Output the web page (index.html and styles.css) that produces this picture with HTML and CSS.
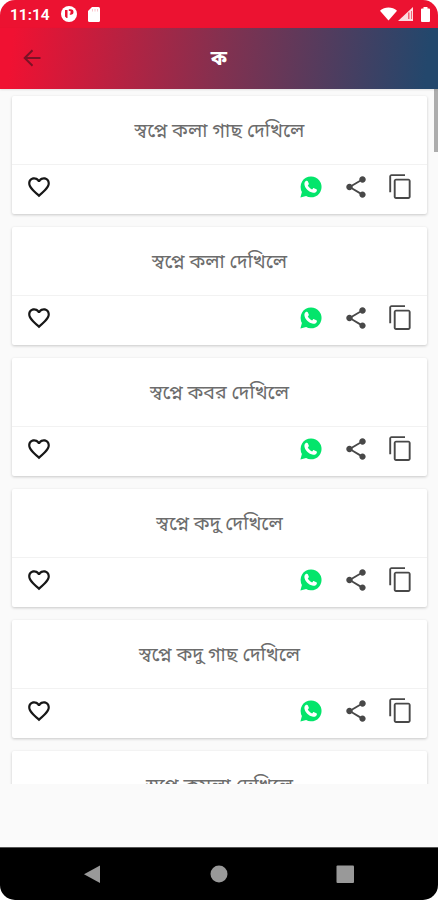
FILE: index.html
```html
<!DOCTYPE html>
<html lang="bn">
<head>
<meta charset="utf-8">
<title>ক</title>
<link rel="stylesheet" href="styles.css">
</head>
<body>
<svg class="sprite" aria-hidden="true">
  <symbol id="heart" viewBox="0 0 24 24"><path d="M16.5 3c-1.74 0-3.41.81-4.5 2.09C10.91 3.81 9.24 3 7.5 3 4.42 3 2 5.42 2 8.5c0 3.78 3.4 6.86 8.55 11.54L12 21.35l1.45-1.32C18.6 15.36 22 12.28 22 8.5 22 5.42 19.58 3 16.5 3zm-4.4 15.55l-.1.1-.1-.1C7.14 14.24 4 11.39 4 8.5 4 6.5 5.5 5 7.5 5c1.54 0 3.04.99 3.57 2.36h1.87C13.46 5.99 14.96 5 16.5 5c2 0 3.5 1.5 3.5 3.5 0 2.89-3.14 5.74-7.9 10.05z"/></symbol>
  <symbol id="chat" viewBox="0 0 22 22"><path fill="#04e56b" d="M11 .5a10.4 10.4 0 0 0-9.1 15.4L.4 21.500l5.700-1.500A10.400 10.400 0 1 0 11 .5z"/><path fill="#fff" d="M6.300 4.800c.600-.3 1.300-.1 1.500.5l1 2.300c.1.400 0 .8-.3 1.100l-.7.900c1 1.800 2.400 3.100 4.300 3.900l.9-1.100c.3-.4.700-.4 1.100-.2l2.300 1.100c.5.200.6.600.5 1.100-.4 1.900-2.100 2.700-3.800 2.400-4.500-.8-8.200-4.300-8.700-8.500-.1-1.600.7-3 1.900-3.500z"/></symbol>
  <symbol id="share" viewBox="0 0 24 24"><path d="M18 16.080c-.76 0-1.440.3-1.960.77L8.910 12.700c.05-.23.090-.46.090-.7s-.04-.47-.09-.7l7.050-4.110c.54.5 1.250.81 2.040.81 1.660 0 3-1.340 3-3s-1.340-3-3-3-3 1.340-3 3c0 .24.040.47.090.7L8.040 9.810C7.500 9.310 6.790 9 6 9c-1.660 0-3 1.340-3 3s1.340 3 3 3c.79 0 1.500-.31 2.040-.81l7.120 4.160c-.05.21-.08.43-.08.65 0 1.610 1.310 2.920 2.920 2.920s2.920-1.310 2.920-2.920-1.310-2.920-2.920-2.920z"/></symbol>
  <symbol id="copy" viewBox="0 0 24 24"><path d="M16 1H4c-1.100 0-2 .9-2 2v14h1.700V2.700H16V1zm3 4H8c-1.100 0-2 .9-2 2v14c0 1.100.9 2 2 2h11c1.100 0 2-.9 2-2V7c0-1.100-.9-2-2-2zm.3 16.300H7.700V6.700h11.600v14.600z"/></symbol>
</svg>
<div class="phone">
  <div class="status">
    <span class="time">11:14</span>
    <svg class="s-app" viewBox="0 0 16 16"><circle cx="8" cy="8" r="8" fill="#fff"/><path fill="#ec1231" d="M4 4h2.500v8H5.500L4 10.500zM7.800 3.300h2a2.700 2.700 0 0 1 0 5.400H8.800V7.500h.7V5H7.800z"/></svg>
    <svg class="s-card" viewBox="0 0 12 15"><path fill="#fff" d="M4 0h6.500A1.500 1.500 0 0 1 12 1.500v12a1.500 1.500 0 0 1-1.500 1.500h-9A1.500 1.500 0 0 1 0 13.500V4z"/><path stroke="#ec1231" stroke-opacity=".25" d="M4.500 2v2.500M7 2v2.500M9.500 2v2.500"/></svg>
    <span class="spacer"></span>
    <svg class="s-wifi" viewBox="0 0 18 14"><path fill="#fff" d="M0 3.500C5-1 13-1 18 3.500L9 14z"/></svg>
    <svg class="s-signal" viewBox="0 0 15 14"><path fill="#fff" fill-opacity=".85" d="M0 14 15 0v14z"/><path fill="#ec1231" fill-opacity=".6" d="M10 5.500h1.500V12H10zM13 4h1v8h-1z"/></svg>
    <svg class="s-battery" viewBox="0 0 9 15"><path fill="#fff" d="M2.500 0h4v1.500H8a1 1 0 0 1 1 1V14a1 1 0 0 1-1 1H1a1 1 0 0 1-1-1V2.500a1 1 0 0 1 1-1h1.500z"/></svg>
  </div>
  <header class="bar">
    <svg class="back" viewBox="0 0 18 18"><path d="M17.500 9H2M9.500 1.200 1.700 9l7.800 7.800"/></svg>
    <h1>ক</h1>
  </header>
  <main class="list">
    <article class="card"><p>স্বপ্নে কলা গাছ দেখিলে</p><div class="actions"><svg class="heart"><use href="#heart"/></svg><svg class="chat"><use href="#chat"/></svg><svg class="share"><use href="#share"/></svg><svg class="copy"><use href="#copy"/></svg></div></article>
    <article class="card"><p>স্বপ্নে কলা দেখিলে</p><div class="actions"><svg class="heart"><use href="#heart"/></svg><svg class="chat"><use href="#chat"/></svg><svg class="share"><use href="#share"/></svg><svg class="copy"><use href="#copy"/></svg></div></article>
    <article class="card"><p>স্বপ্নে কবর দেখিলে</p><div class="actions"><svg class="heart"><use href="#heart"/></svg><svg class="chat"><use href="#chat"/></svg><svg class="share"><use href="#share"/></svg><svg class="copy"><use href="#copy"/></svg></div></article>
    <article class="card"><p>স্বপ্নে কদু দেখিলে</p><div class="actions"><svg class="heart"><use href="#heart"/></svg><svg class="chat"><use href="#chat"/></svg><svg class="share"><use href="#share"/></svg><svg class="copy"><use href="#copy"/></svg></div></article>
    <article class="card"><p>স্বপ্নে কদু গাছ দেখিলে</p><div class="actions"><svg class="heart"><use href="#heart"/></svg><svg class="chat"><use href="#chat"/></svg><svg class="share"><use href="#share"/></svg><svg class="copy"><use href="#copy"/></svg></div></article>
    <article class="card"><p>স্বপ্নে কমলা দেখিলে</p></article>
    <span class="thumb"></span>
  </main>
  <div class="gap"></div>
  <nav class="nav">
    <svg viewBox="0 0 18 18"><path d="M17 .5v17.500L1 9.300z"/></svg>
    <svg viewBox="0 0 18 18"><circle cx="9" cy="9" r="8.500"/></svg>
    <svg viewBox="0 0 18 18"><rect x=".5" y=".5" width="17.500" height="17.500" rx="1"/></svg>
  </nav>
</div>
</body>
</html>
```
FILE: styles.css
```css
* { box-sizing: border-box; }
body { margin: 0; background: #fff; font-family: Roboto, "Noto Sans Bengali", "Noto Sans", sans-serif; }
svg { flex: none; display: block; }
.sprite { position: absolute; width: 0; height: 0; }
.phone { width: 438px; height: 900px; display: flex; flex-direction: column; overflow: hidden; border-radius: 15px; background: #fafafa; }
.status { height: 28px; flex: none; display: flex; align-items: center; padding: 0 8px 0 10px; background: #ec1231; color: #fff; }
.time { width: 40px; font-size: 15.5px; font-weight: 600; line-height: 28px; margin-top: 2px; }
.spacer { flex: 1; }
.s-app { width: 16px; height: 16px; margin-left: 11px; }
.s-card { width: 12px; height: 15px; margin-left: 11px; }
.s-wifi { width: 17px; height: 14px; }
.s-signal { width: 15px; height: 14px; margin-left: 1px; }
.s-battery { width: 9px; height: 15px; margin-left: 8px; }
.bar { height: 61px; flex: none; display: grid; grid-template-columns: 60px 1fr 60px; align-items: center; padding-bottom: 1px; background: linear-gradient(96deg, #f01132 3%, #84304f 50%, #23476c 97%); box-shadow: 0 1px 2px rgba(0,0,0,.1); z-index: 1; }
.back { width: 18px; height: 18px; margin-left: 23px; fill: none; stroke: #7c1226; stroke-width: 2; }
.bar h1 { margin: 0; font-size: 20px; line-height: 30px; text-align: center; color: #fff; }
.list { position: relative; height: 695px; flex: none; overflow: hidden; padding: 7px 11px 0 12px; }
.card { height: 118px; margin-bottom: 13px; border-radius: 2px; background: #fff; box-shadow: 0 1px 3px rgba(0,0,0,.2); }
.card p { height: 69px; margin: 0; border-bottom: 1px solid #f2f2f2; text-align: center; font-size: 19.6px; line-height: 70px; color: #6c6c6c; }
.actions { height: 49px; display: flex; align-items: center; padding: 0 13px 6px 13.5px; fill: #484848; }
.heart { width: 26px; height: 26px; fill: #171717; margin-right: auto; }
.chat { width: 22px; height: 22px; margin-right: 21px; }
.share { width: 26px; height: 26px; margin-right: 18px; }
.copy { width: 27px; height: 27px; }
.thumb { position: absolute; top: 0; right: 0; width: 4px; height: 63px; background: #adadad; }
.gap { flex: 1; }
.nav { height: 53px; flex: none; display: flex; justify-content: space-between; align-items: center; padding: 0 84px 0 83px; background: #000; fill: #999; border-top: 1px solid #555; }
.nav svg { width: 18px; height: 18px; }
```
